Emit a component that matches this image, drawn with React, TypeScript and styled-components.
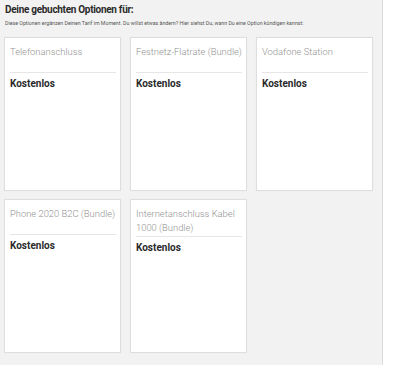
import styled, { createGlobalStyle } from "styled-components";

const options = [
  "Telefonanschluss",
  "Festnetz-Flatrate (Bundle)",
  "Vodafone Station",
  "Phone 2020 B2C (Bundle)",
  "Internetanschluss Kabel 1000 (Bundle)",
];

export default function App() {
  return (
    <>
      <GlobalStyle />
      <Page>
        <Heading>Deine gebuchten Optionen für:</Heading>
        <Intro>
          Diese Optionen ergänzen Deinen Tarif im Moment. Du willst etwas ändern? Hier siehst Du, wann Du eine Option kündigen kannst:
        </Intro>
        <Grid>
          {options.map((name) => (
            <Card key={name}>
              <CardTitle>{name}</CardTitle>
              <Price>Kostenlos</Price>
            </Card>
          ))}
        </Grid>
      </Page>
    </>
  );
}

const GlobalStyle = createGlobalStyle`
  html, body {
    margin: 0;
    padding: 0;
    background: #fff;
  }
  body {
    font-family: "Roboto", "Liberation Sans", Arial, sans-serif;
  }
`;

const Page = styled.div`
  width: 383px;
  height: 365px;
  box-sizing: border-box;
  background: #f2f2f2;
  border-right: 1px solid #dcdcdc;
  padding: 3px 0 0 4px;
`;

const Heading = styled.h2`
  margin: 0 0 0 1px;
  font-size: 10px;
  line-height: 13px;
  font-weight: 700;
  color: #2a2a2a;
  letter-spacing: -0.3px;
`;

const Intro = styled.p`
  margin: 4px 0 0 1px;
  font-size: 5.25px;
  line-height: 7px;
  color: #555;
  white-space: nowrap;
`;

const Grid = styled.div`
  display: grid;
  grid-template-columns: repeat(3, 117px);
  grid-auto-rows: 154px;
  column-gap: 9px;
  row-gap: 8px;
  margin-top: 10px;
`;

const Card = styled.div`
  background: #fff;
  border: 1px solid #dedede;
  box-shadow: 0 0 1px rgba(0, 0, 0, 0.06);
  padding: 7px 4px 0 5px;
  box-sizing: border-box;
`;

const CardTitle = styled.div`
  min-height: 26px;
  padding-bottom: 1px;
  border-bottom: 1px solid #e6e6e6;
  font-size: 9.4px;
  line-height: 14px;
  font-weight: 300;
  color: #939393;
`;

const Price = styled.div`
  margin-top: 5px;
  font-size: 10px;
  line-height: 12px;
  font-weight: 700;
  color: #2a2a2a;
`;
